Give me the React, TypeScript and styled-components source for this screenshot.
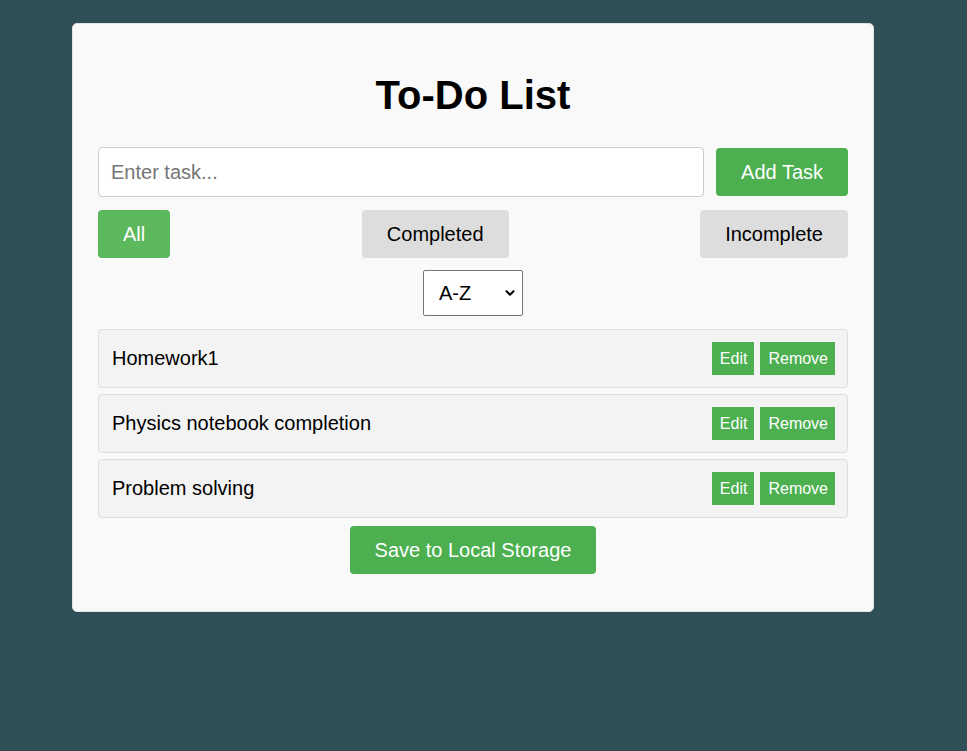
import React, { useState } from "react";
import styled, { createGlobalStyle } from "styled-components";
import { ChevronDown } from "lucide-react";

const GlobalStyle = createGlobalStyle`
  html, body {
    margin: 0;
    padding: 0;
    background-color: #2f4f57;
    font-family: "Liberation Sans", Arial, sans-serif;
  }
`;

const Page = styled.div`
  min-height: 751px;
  padding: 23px 0 0 72px;
  box-sizing: border-box;
`;

const Card = styled.div`
  width: 750px;
  padding: 25px 25px 37px;
  background-color: #f9f9f9;
  border: 1px solid #e2e2e2;
  border-radius: 5px;
`;

const Title = styled.h1`
  margin: 23px 0 29px;
  font-size: 40px;
  line-height: 46px;
  font-weight: 700;
  text-align: center;
  color: #000;
`;

const InputRow = styled.div`
  display: flex;
  align-items: center;
  gap: 12px;
`;

const TaskInput = styled.input`
  flex: 1;
  height: 50px;
  padding: 0 12px;
  box-sizing: border-box;
  border: 1px solid #ccc;
  border-radius: 4px;
  background: #fff;
  font-family: inherit;
  font-size: 20px;
  color: #000;
  outline: none;

  &::placeholder {
    color: #757575;
  }
`;

const Button = styled.button<{ $tone?: "green" | "light" | "gray" }>`
  height: 48px;
  padding: 0 25px;
  border: none;
  border-radius: 4px;
  font-family: inherit;
  font-size: 20px;
  cursor: pointer;
  background-color: ${(p) =>
    p.$tone === "light" ? "#5cb85c" : p.$tone === "gray" ? "#dddddd" : "#4caf50"};
  color: ${(p) => (p.$tone === "gray" ? "#000" : "#fff")};
`;

const FilterRow = styled.div`
  display: flex;
  justify-content: space-between;
  margin-top: 13px;
`;

const SortRow = styled.div`
  display: flex;
  justify-content: center;
  margin-top: 12px;
`;

const SelectWrap = styled.div`
  position: relative;
  width: 100px;
  height: 46px;

  & svg {
    position: absolute;
    right: 6px;
    top: 16px;
    pointer-events: none;
  }
`;

const SortSelect = styled.select`
  width: 100%;
  height: 100%;
  padding: 0 0 0 15px;
  appearance: none;
  -webkit-appearance: none;
  border: 1px solid #767676;
  border-radius: 2px;
  background: #fff;
  font-family: inherit;
  font-size: 20px;
  color: #000;
`;

const TaskList = styled.ul`
  list-style: none;
  margin: 13px 0 0;
  padding: 0;
  display: flex;
  flex-direction: column;
  gap: 6px;
`;

const TaskItem = styled.li`
  display: flex;
  align-items: center;
  justify-content: space-between;
  padding: 12px 12px 12px 13px;
  background-color: #f3f3f3;
  border: 1px solid #dddddd;
  border-radius: 4px;
  font-size: 20px;
  color: #000;
`;

const TaskActions = styled.div`
  display: flex;
  gap: 6px;
`;

const SmallButton = styled.button`
  height: 33px;
  padding: 0 7px 0 8px;
  border: none;
  background-color: #4caf50;
  color: #fff;
  font-family: inherit;
  font-size: 16px;
  cursor: pointer;
`;

const SaveRow = styled.div`
  display: flex;
  justify-content: center;
  margin-top: 8px;
`;

const tasks = ["Homework1", "Physics notebook completion", "Problem solving"];

export default function App() {
  const [sort, setSort] = useState("az");

  return (
    <Page>
      <GlobalStyle />
      <Card>
        <Title>To-Do List</Title>
        <InputRow>
          <TaskInput placeholder="Enter task..." />
          <Button>Add Task</Button>
        </InputRow>
        <FilterRow>
          <Button $tone="light">All</Button>
          <Button $tone="gray">Completed</Button>
          <Button $tone="gray">Incomplete</Button>
        </FilterRow>
        <SortRow>
          <SelectWrap>
            <SortSelect value={sort} onChange={(e) => setSort(e.target.value)}>
              <option value="az">A-Z</option>
              <option value="za">Z-A</option>
            </SortSelect>
            <ChevronDown size={14} strokeWidth={3.5} color="#000" />
          </SelectWrap>
        </SortRow>
        <TaskList>
          {tasks.map((t) => (
            <TaskItem key={t}>
              <span>{t}</span>
              <TaskActions>
                <SmallButton>Edit</SmallButton>
                <SmallButton>Remove</SmallButton>
              </TaskActions>
            </TaskItem>
          ))}
        </TaskList>
        <SaveRow>
          <Button>Save to Local Storage</Button>
        </SaveRow>
      </Card>
    </Page>
  );
}
